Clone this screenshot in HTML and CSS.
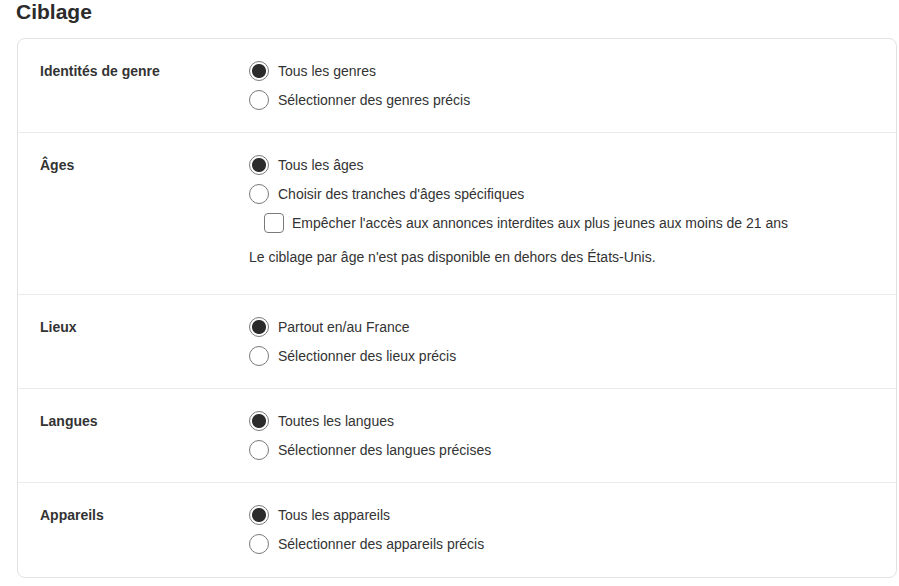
FILE: index.html
```html
<!DOCTYPE html>
<html lang="fr">
<head>
  <meta charset="UTF-8">
  <meta name="viewport" content="width=device-width, initial-scale=1.0">
  <title>Ciblage</title>
  <link rel="stylesheet" href="styles.css">
</head>
<body>
  <div class="page">
    <h1 class="title">Ciblage</h1>

    <div class="card">
      <!-- Genre -->
      <div class="row">
        <div class="label">Identités de genre</div>
        <div class="options">
          <label class="option"><input type="radio" name="genre" checked> Tous les genres</label>
          <label class="option"><input type="radio" name="genre"> Sélectionner des genres précis</label>
        </div>
      </div>

      <!-- Âges -->
      <div class="row">
        <div class="label">Âges</div>
        <div class="options">
          <label class="option"><input type="radio" name="age" checked> Tous les âges</label>
          <label class="option"><input type="radio" name="age"> Choisir des tranches d'âges spécifiques</label>
          <label class="option sub"><input type="checkbox"> Empêcher l'accès aux annonces interdites aux plus jeunes aux moins de 21 ans</label>
          <p class="note">Le ciblage par âge n'est pas disponible en dehors des États-Unis.</p>
        </div>
      </div>

      <!-- Lieux -->
      <div class="row">
        <div class="label">Lieux</div>
        <div class="options">
          <label class="option"><input type="radio" name="lieu" checked> Partout en/au France</label>
          <label class="option"><input type="radio" name="lieu"> Sélectionner des lieux précis</label>
        </div>
      </div>

      <!-- Langues -->
      <div class="row">
        <div class="label">Langues</div>
        <div class="options">
          <label class="option"><input type="radio" name="langue" checked> Toutes les langues</label>
          <label class="option"><input type="radio" name="langue"> Sélectionner des langues précises</label>
        </div>
      </div>

      <!-- Appareils -->
      <div class="row">
        <div class="label">Appareils</div>
        <div class="options">
          <label class="option"><input type="radio" name="appareil" checked> Tous les appareils</label>
          <label class="option"><input type="radio" name="appareil"> Sélectionner des appareils précis</label>
        </div>
      </div>
    </div>
  </div>
</body>
</html>
```

FILE: styles.css
```css
body {
  font-family: "Liberation Sans", Arial, sans-serif;
  margin: 0;
  padding: 0;
  color: #333;
  background: #fff;
}
.page {
  padding: 0 2px 0 17px;
}
.title {
  font-size: 21px;
  line-height: 24px;
  font-weight: bold;
  color: #2b2b2b;
  margin: 0 0 14px -1px;
}
.card {
  width: 880px;
  box-sizing: border-box;
  border: 1px solid #e2e2e2;
  border-radius: 8px;
}
.row {
  display: flex;
  padding: 22px 22px;
  border-top: 1px solid #ebebeb;
}
.row:first-child {
  border-top: none;
}
.row:last-child {
  padding-bottom: 23px;
}
.label {
  width: 209px;
  flex-shrink: 0;
  font-size: 14px;
  line-height: 20px;
  font-weight: bold;
  color: #333;
}
.options {
  display: flex;
  flex-direction: column;
  gap: 9px;
}
.option {
  display: flex;
  align-items: center;
  gap: 9px;
  font-size: 14px;
  line-height: 20px;
  color: #333;
}
.option.sub {
  margin-left: 15px;
  gap: 8px;
}
.option input {
  appearance: none;
  -webkit-appearance: none;
  margin: 0;
  width: 20px;
  height: 20px;
  flex-shrink: 0;
  border: 1px solid #7a7a7a;
  background: #fff;
}
.option input[type="radio"] {
  border-radius: 50%;
}
.option input[type="radio"]:checked {
  background: radial-gradient(circle, #2b2b2b 0, #2b2b2b 6.5px, #fff 7.5px);
}
.option input[type="checkbox"] {
  border-radius: 4px;
}
.note {
  margin: 5px 0 5px 0;
  font-size: 14px;
  line-height: 20px;
  color: #333;
}
```
